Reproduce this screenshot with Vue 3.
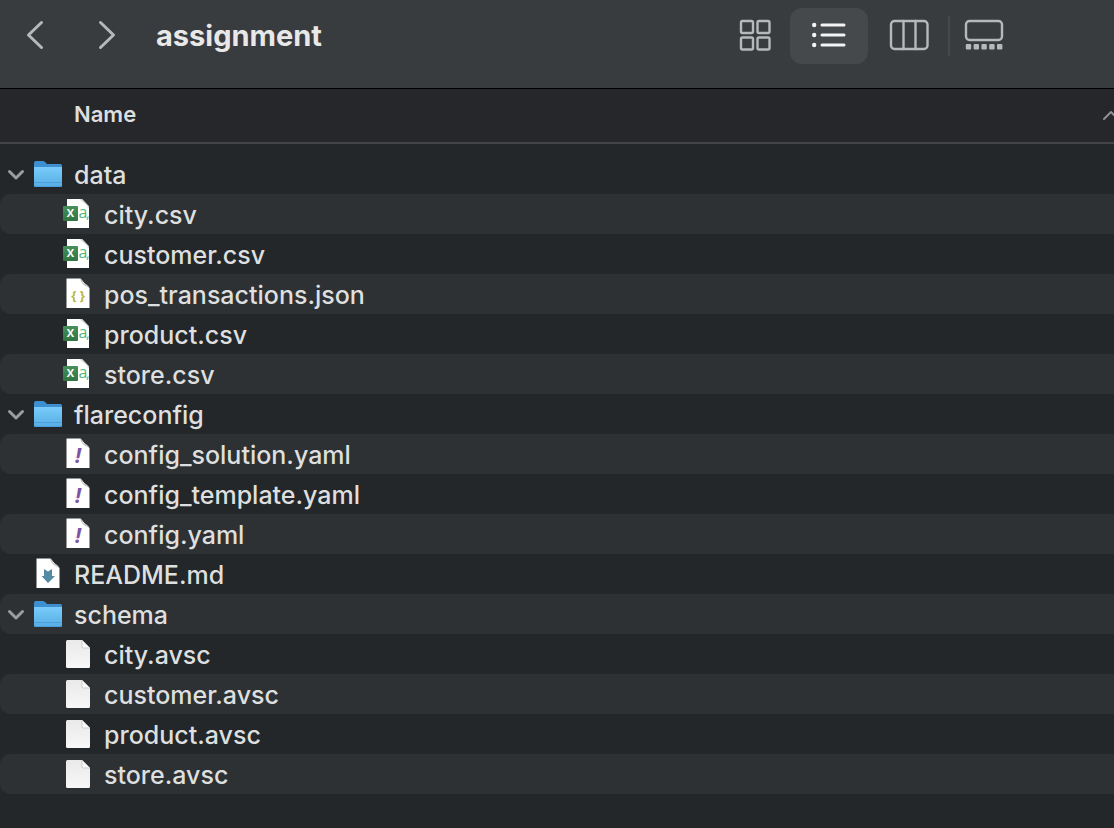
<script setup>
import { computed, ref } from 'vue'

const view = ref('list')
const ascending = ref(true)
const open = ref({ data: true, flareconfig: true, schema: true })

const tree = [
  {
    name: 'data',
    children: [
      { name: 'city.csv', kind: 'csv' },
      { name: 'customer.csv', kind: 'csv' },
      { name: 'pos_transactions.json', kind: 'json' },
      { name: 'product.csv', kind: 'csv' },
      { name: 'store.csv', kind: 'csv' },
    ],
  },
  {
    name: 'flareconfig',
    children: [
      { name: 'config_solution.yaml', kind: 'yaml' },
      { name: 'config_template.yaml', kind: 'yaml' },
      { name: 'config.yaml', kind: 'yaml' },
    ],
  },
  { name: 'README.md', kind: 'md' },
  {
    name: 'schema',
    children: [
      { name: 'city.avsc', kind: 'plain' },
      { name: 'customer.avsc', kind: 'plain' },
      { name: 'product.avsc', kind: 'plain' },
      { name: 'store.avsc', kind: 'plain' },
    ],
  },
]

const rows = computed(() => {
  const order = (list) => (ascending.value ? list : [...list].reverse())
  return order(tree).flatMap((item) => {
    if (!item.children) return [{ ...item, nested: false }]
    const head = { name: item.name, kind: 'folder', nested: false }
    if (!open.value[item.name]) return [head]
    return [head, ...order(item.children).map((c) => ({ ...c, nested: true, parent: item.name }))]
  })
})
</script>

<template>
  <main class="finder">
    <svg class="defs" width="0" height="0" aria-hidden="true">
      <defs>
        <linearGradient id="folder-front" x1="0" y1="0" x2="0" y2="1">
          <stop offset="0" stop-color="#79cbfa" />
          <stop offset="1" stop-color="#56aee5" />
        </linearGradient>
        <linearGradient id="excel" x1="0" y1="0" x2="0" y2="1">
          <stop offset="0" stop-color="#45905a" />
          <stop offset="1" stop-color="#327445" />
        </linearGradient>
        <linearGradient id="paper" x1="0" y1="0" x2="0" y2="1">
          <stop offset="0" stop-color="#e9e9e9" />
          <stop offset="1" stop-color="#f8f8f8" />
        </linearGradient>
      </defs>
    </svg>

    <header class="toolbar">
      <nav class="history" aria-label="History">
        <button type="button" aria-label="Back">
          <svg width="18" height="30" viewBox="0 0 18 30"><path d="M15.500 2.500 2.500 15 15.500 27.500" /></svg>
        </button>
        <button type="button" aria-label="Forward">
          <svg width="18" height="30" viewBox="0 0 18 30"><path d="M2.500 2.500 15.500 15 2.500 27.500" /></svg>
        </button>
      </nav>
      <h1>assignment</h1>
      <div class="views" role="group" aria-label="View">
        <button type="button" class="first" aria-label="Icons" :class="{ active: view === 'icons' }" @click="view = 'icons'">
          <svg width="30" height="30" viewBox="0 0 30 30">
            <rect x="1" y="1" width="12" height="12" rx="1.5" />
            <rect x="17.500" y="1" width="12" height="12" rx="1.5" />
            <rect x="1" y="17.500" width="12" height="12" rx="1.5" />
            <rect x="17.500" y="17.500" width="12" height="12" rx="1.5" />
          </svg>
        </button>
        <button type="button" class="wide" aria-label="List" :class="{ active: view === 'list' }" @click="view = 'list'">
          <svg width="34" height="26" viewBox="0 0 34 26">
            <g class="solid">
              <circle cx="2.2" cy="3" r="2.2" /><circle cx="2.2" cy="13" r="2.2" /><circle cx="2.2" cy="23" r="2.2" />
            </g>
            <path class="bars" d="M10 3H32M10 13H32M10 23H32" />
          </svg>
        </button>
        <button type="button" class="wider" aria-label="Columns" :class="{ active: view === 'columns' }" @click="view = 'columns'">
          <svg width="38" height="30" viewBox="0 0 38 30">
            <rect x="2" y="1" width="36.500" height="28" rx="3.5" />
            <path d="M14.500 1V29M26.500 1V29" />
          </svg>
        </button>
        <span class="divider"></span>
        <button type="button" aria-label="Gallery" :class="{ active: view === 'gallery' }" @click="view = 'gallery'">
          <svg width="38" height="30" viewBox="0 0 38 30">
            <rect x="1" y="1" width="36" height="19" rx="3.5" />
            <g class="solid">
              <rect v-for="n in 5" :key="n" :x="(n - 1) * 7.8 + 0.8" y="24" width="5.400" height="5.400" rx="1" />
            </g>
          </svg>
        </button>
      </div>
    </header>

    <table class="files">
      <thead>
        <tr>
          <th scope="col">
            <button type="button" class="sort" @click="ascending = !ascending">
              <span>Name</span>
              <svg :class="{ flipped: !ascending }" width="16" height="10" viewBox="0 0 16 10" aria-hidden="true"><path d="M1 10 8 3 15 10" /></svg>
            </button>
          </th>
        </tr>
      </thead>
      <tbody>
        <tr v-for="row in rows" :key="(row.parent || '') + row.name">
          <td>
            <div class="entry" :class="{ nested: row.nested }">
              <button
                v-if="row.kind === 'folder'"
                type="button"
                class="disclosure"
                :aria-label="'Toggle ' + row.name"
                :aria-expanded="open[row.name]"
                @click="open[row.name] = !open[row.name]"
              >
                <svg :class="{ closed: !open[row.name] }" width="16" height="10" viewBox="0 0 16 10"><path d="M1.500 2.500 8 9 14.500 2.500" /></svg>
              </button>
              <span v-else class="disclosure"></span>

              <svg class="icon" width="28" height="32" viewBox="0 0 28 32" aria-hidden="true">
                <template v-if="row.kind === 'folder'">
                  <path fill="#3d8fcf" d="M0 5Q0 3 2 3H9Q10 3 11 4L13 6H26.500Q28 6 28 7.500V12H0Z" />
                  <path fill="url(#folder-front)" d="M0 9H28V27Q28 29 26.500 29H1.500Q0 29 0 27Z" />
                  <path stroke="#4698d4" d="M0 24.500H28M0 28.500H28" opacity="0.7" />
                </template>
                <template v-else-if="row.kind === 'csv'">
                  <path fill="#fff" d="M3 1H18L25 8.500V30H3Z" />
                  <path fill="#d3d3d3" d="M16 1H18L25 8.500V10C21 9 18 6 16 1Z" />
                  <path fill="#fff" d="M17 2 24.500 9C20 9 18 7 17 2Z" />
                  <text class="letters" x="14.500" y="20" font-size="16" fill="#4fb87f">a</text>
                  <text class="letters" x="22" y="20" font-size="14" fill="#4fb87f">,</text>
                  <rect x="-1" y="8" width="15" height="15" rx="1" fill="url(#excel)" />
                  <text class="letters" x="6.500" y="19" font-size="11" font-weight="700" text-anchor="middle" fill="#fff">X</text>
                </template>
                <template v-else-if="row.kind === 'plain'">
                  <path fill="url(#paper)" d="M3.500 2H18L26 10V28.500Q26 30 24.500 30H3.500Q2 30 2 28.500V3.500Q2 2 3.500 2Z" />
                  <path fill="#fafafa" stroke="#bbb" stroke-width="0.7" d="M18 2V9Q18 10 19 10H26Z" />
                </template>
                <template v-else>
                  <path fill="#fff" d="M2.500 0.500H16.500C18 2 20 5 25.500 10V30H2.500Z" />
                  <path fill="#c9c9c9" d="M16 0.500C18 1 18.500 3 19 5 22 6 24 7 25.500 10 22 8 18 8 16 0.500Z" />
                  <text v-if="row.kind === 'json'" class="letters" x="14" y="22" font-size="13" font-weight="700" text-anchor="middle" fill="#b7b536">{ }</text>
                  <text v-else-if="row.kind === 'yaml'" class="letters" x="14" y="25" font-size="21" font-weight="700" font-style="italic" text-anchor="middle" fill="#81559e">!</text>
                  <path v-else fill="#5289a5" d="M10 11 14 13.500 18 11V18H21L14 25 7.500 18H10Z" />
                </template>
              </svg>
              <span class="name">{{ row.name }}</span>
            </div>
          </td>
        </tr>
      </tbody>
    </table>
  </main>
</template>

<style>
body {
  background: #23272a;
}
</style>

<style scoped>
.finder {
  min-height: 100vh;
  overflow: hidden;
  background: #23272a;
  color: #dedfdf;
  font-family: Inter, "Liberation Sans", sans-serif;
}
.defs {
  position: absolute;
}
button {
  display: flex;
  align-items: center;
  justify-content: center;
  border: 0;
  padding: 0;
  background: none;
  color: inherit;
  font: inherit;
}
svg {
  flex: none;
  overflow: visible;
}
.toolbar {
  display: flex;
  align-items: flex-start;
  padding: 8px 96px 24px 26px;
  border-bottom: 1px solid #000;
  background: #393c3e;
}
.toolbar svg,
.sort svg,
.disclosure svg {
  fill: none;
  stroke: currentColor;
  stroke-width: 2;
  stroke-linecap: round;
  stroke-linejoin: round;
}
.history {
  display: flex;
  gap: 54px;
  color: #b5b9bb;
}
.history button {
  width: 18px;
  height: 54px;
}
.toolbar .history svg {
  stroke-width: 3;
}
h1 {
  margin: 0 0 0 40px;
  font-size: 29px;
  font-weight: 700;
  line-height: 56px;
  color: #e8e8e8;
}
.views {
  display: flex;
  align-items: center;
  margin-left: auto;
  color: #b5b9bb;
}
.views button {
  width: 68px;
  height: 56px;
  padding-bottom: 2px;
  border-radius: 12px;
}
.toolbar .views svg {
  stroke-width: 2.4;
}
.views .first {
  width: 70px;
}
.views .wide {
  width: 78px;
}
.views .wider {
  width: 80px;
}
.views .active {
  background: #46494b;
  color: #f3f3f3;
}
.views .bars {
  stroke-width: 3;
}
.views .solid {
  fill: currentColor;
  stroke: none;
}
.divider {
  width: 2px;
  height: 40px;
  background: #46494b;
}
.files {
  width: 100%;
  border-spacing: 0;
}
th {
  padding: 0;
  border-bottom: 2px solid #434446;
  background: #26272a;
}
.sort {
  width: 100%;
  height: 53px;
  justify-content: space-between;
  padding: 0 0 4px 74px;
  overflow: hidden;
  color: #dedede;
  font-size: 22px;
  font-weight: 600;
  line-height: 28px;
}
.sort svg {
  margin-right: -5px;
  color: #8f9092;
}
.flipped {
  transform: rotate(180deg);
}
tbody::before {
  content: "";
  display: block;
  height: 10px;
}
td {
  height: 40px;
  padding: 0;
}
tbody tr:nth-child(even) td {
  border-radius: 10px 0 0 10px;
  background: #2d3133;
}
.entry {
  display: flex;
  align-items: center;
  height: 40px;
  padding-left: 8px;
}
.nested {
  padding-left: 38px;
}
.disclosure {
  width: 16px;
  height: 40px;
  color: #9b9d9e;
}
.disclosure svg {
  stroke-width: 3;
}
.closed {
  transform: rotate(-90deg);
}
.icon {
  margin: 0 12px 0 10px;
}
.letters {
  font-family: "Open Sans", "Liberation Sans", sans-serif;
}
.name {
  padding-top: 2px;
  font-size: 25px;
  font-weight: 500;
  line-height: 38px;
  white-space: nowrap;
}
</style>
